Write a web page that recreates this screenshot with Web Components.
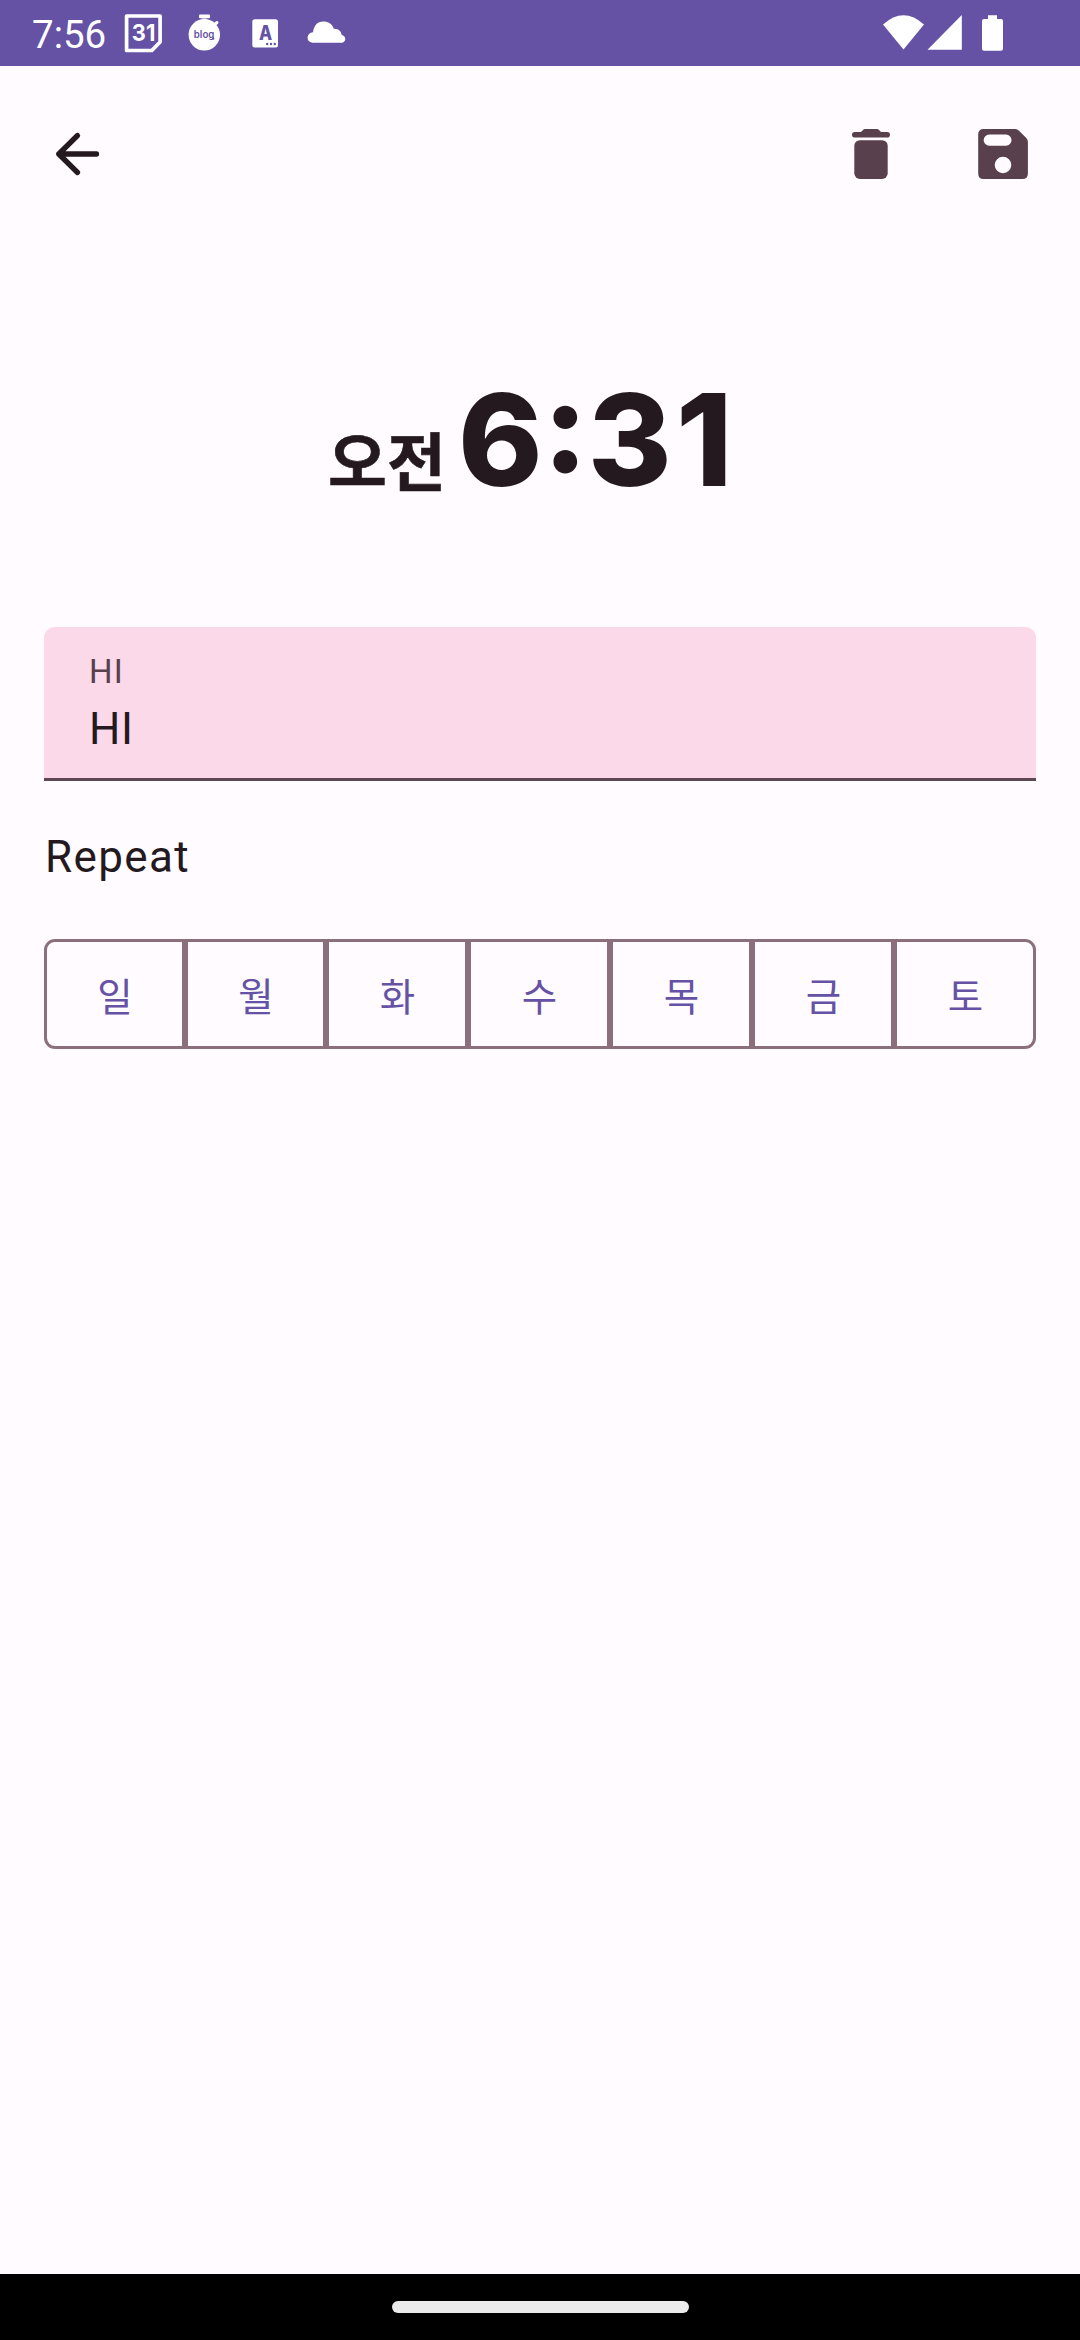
<!DOCTYPE html>
<html lang="ko">
<head>
<meta charset="utf-8">
<title>Alarm</title>
<style>
html,body{margin:0;padding:0;height:100%;background:#fffbff}
body{font-family:Roboto,"Noto Sans CJK KR",sans-serif}
</style>
</head>
<body>
<alarm-screen></alarm-screen>
<script>
const define=(name,html)=>customElements.define(name,class extends HTMLElement{
  constructor(){super();this.attachShadow({mode:'open'}).innerHTML=html;}
});

define('status-bar',`<style>
:host{display:flex;height:66px;background:#6552a5;color:#fff;justify-content:space-between}
div{display:flex}
.time{font:400 38.5px/66px Roboto,sans-serif;padding:2px 0 0 32px;width:88px;height:64px;box-sizing:content-box;white-space:nowrap}
svg{display:block;fill:#fff}
</style>
<div><span class="time">7:56</span>
<svg width="240" height="66" viewBox="120 0 240 66">
<path d="M126.600 16H160.100V42L151.800 50.500H126.600Z" fill="none" stroke="#fff" stroke-width="3.700" stroke-linejoin="round"/>
<text x="143.600" y="41.200" text-anchor="middle" font-family="Inter" font-weight="700" font-size="23.500" textLength="23.500" lengthAdjust="spacingAndGlyphs">31</text>
<circle cx="204.3" cy="34.8" r="15.7"/><rect x="199" y="14.5" width="11" height="3.7" rx="1"/><path d="M202 18H206.500V21H202Z" opacity=".45"/><path d="M214 25L217 22.500" stroke="#fff" stroke-width="3" stroke-linecap="round"/>
<text x="204.100" y="37.900" text-anchor="middle" font-family="Inter" font-weight="600" font-size="9.800" fill="#6552a5" textLength="20.500" lengthAdjust="spacingAndGlyphs">blog</text>
<circle cx="213.300" cy="38.600" r="1.100" fill="#6552a5"/>
<rect x="252.300" y="19.200" width="25.700" height="28.300" rx="2.500"/>
<text x="265.500" y="40.200" text-anchor="middle" font-family="Inter" font-weight="800" font-size="19.500" fill="#6552a5" textLength="13.200" lengthAdjust="spacingAndGlyphs">A</text>
<g fill="#6552a5"><circle cx="267.200" cy="44" r="1.200"/><circle cx="271" cy="44" r="1.200"/><circle cx="274.800" cy="44" r="1.200"/></g>
<path d="M312.500 42.700C305.500 42.300 306.200 32.500 313 32.300C314 25.500 317.500 21.600 323 21.600C328.500 21.600 332 24 333.800 28.700C338.500 28.500 341.500 31.500 341.700 35.100C346.500 36 346.500 42.300 342 42.700Z"/>
</svg></div>
<svg width="220" height="66" viewBox="860 0 220 66">
<path d="M883 24.500Q903.500 6 924 24.500L903.500 49.500Z"/><path d="M927.500 49.700L961.800 15V49.700Z"/>
<path d="M988 15.300H997V19H1001Q1003 19 1003 21V48.700Q1003 50.700 1001 50.700H984Q982 50.700 982 48.700V21Q982 19 984 19H988Z"/>
</svg>`);

define('app-bar',`<style>
:host{display:flex;height:176px;box-sizing:border-box;padding:55px 44px 0 44px;justify-content:space-between;align-items:flex-start}
svg{display:block}
</style>
<svg width="66" height="66" viewBox="44 121 66 66" fill="none" stroke="#24191e" stroke-width="5.300" stroke-linecap="round" stroke-linejoin="round"><path d="M96.500 154H58.800M77.500 135.500L58.800 154L77.500 172.500"/></svg>
<svg width="196" height="66" viewBox="840 121 196 66" fill="#58404c">
<path d="M854.800 131.900H861L863 129.900Q863.800 129.100 865 129.100H877Q878.200 129.100 879 129.900L881 131.900H887.200A2.750 2.750 0 0 1 887.200 137.500H854.800A2.750 2.750 0 0 1 854.800 131.900Z"/>
<rect x="854.300" y="140.200" width="33.400" height="38.700" rx="5.600"/>
<path fill-rule="evenodd" d="M983.700 129.100H1015Q1017.300 129.100 1019 130.800L1026.300 138.100Q1027.900 139.700 1027.900 142V173.400Q1027.900 178.900 1022.400 178.900H983.700Q978.200 178.900 978.200 173.400V134.600Q978.200 129.100 983.700 129.100ZM989.200 134.600A5.550 5.550 0 0 0 989.200 145.700H1006A5.550 5.550 0 0 0 1006 134.600ZM1003 156.700A8.300 8.300 0 1 0 1003 173.300A8.300 8.300 0 1 0 1003 156.700Z"/>
</svg>`);

define('time-display',`<style>
:host{display:flex;height:385px;box-sizing:border-box;padding:123px 0 0 328px;align-items:baseline;color:#24191e;white-space:nowrap}
.ampm{font:700 64px/150px "Noto Sans CJK KR",sans-serif;width:130px;-webkit-text-stroke:.6px #24191e}
.clock{font:800 128px/150px Inter,sans-serif}
::slotted(.tens){letter-spacing:4.200px}
</style><span class="ampm"><slot name="period"></slot></span><span class="clock"><slot></slot></span>`);

define('filled-field',`<style>
:host{display:flex;flex-direction:column;height:154px;box-sizing:border-box;margin:0 44px;padding:23px 44px 0 45px;background:#fbd9e9;border-bottom:3px solid #5f4653;border-radius:11px 11px 0 0/11px 11px 0 0}
.label{font:400 33px/44px Roboto,sans-serif;letter-spacing:1.100px;color:#58404c;margin-bottom:2px}
.value{font:400 44px/66px Roboto,sans-serif;letter-spacing:.5px;color:#24191e}
</style><span class="label"><slot name="label"></slot></span><span class="value"><slot></slot></span>`);

define('section-title',`<style>
:host{display:block;box-sizing:border-box;margin:0 44px;padding:43px 0 0 1px;height:158px;font:400 44px/66px Roboto,sans-serif;letter-spacing:1.375px;color:#24191e}
</style><slot></slot>`);

define('day-row',`<style>
:host{display:flex;margin:0 44px;height:110px}
::slotted(day-button){flex:0 0 142px}
::slotted(day-button:nth-child(-n+2)){flex-basis:141px}
::slotted(day-button:first-child){border-radius:11px 0 0 11px}
::slotted(day-button:last-child){border-radius:0 11px 11px 0}
</style><slot></slot>`);

define('day-button',`<style>
:host{display:flex;box-sizing:border-box;border:3px solid #8b6f7b;padding-left:1px;align-items:center;justify-content:center;color:#6552a5;font:400 38.5px/55px "Noto Sans CJK KR",sans-serif}
</style><slot></slot>`);

define('nav-bar',`<style>
:host{display:flex;height:66px;background:#000;justify-content:center;box-sizing:border-box;padding-top:27px}
i{display:block;width:297px;height:11.600px;border-radius:6px;background:#ebebeb}
</style><i></i>`);

define('alarm-screen',`<style>
:host{display:flex;flex-direction:column;width:1080px;height:2340px;background:#fffbff}
main{flex:1}
</style>
<status-bar></status-bar><main><app-bar></app-bar>
<time-display><span slot="period">오전</span><span>6:</span><span class="tens">3</span><span>1</span></time-display>
<filled-field><span slot="label">HI</span>HI</filled-field>
<section-title>Repeat</section-title>
<day-row><day-button>일</day-button><day-button>월</day-button><day-button>화</day-button><day-button>수</day-button><day-button>목</day-button><day-button>금</day-button><day-button>토</day-button></day-row></main>
<nav-bar></nav-bar>`);
</script>
</body>
</html>
